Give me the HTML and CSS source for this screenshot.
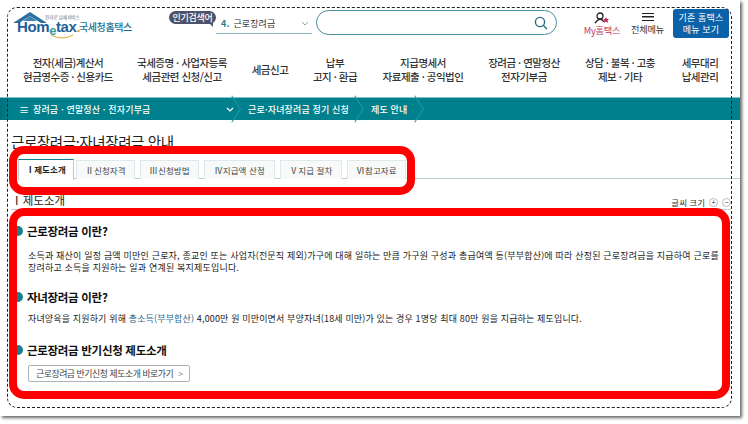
FILE: index.html
```html
<!DOCTYPE html>
<html lang="ko">
<head>
  <meta charset="UTF-8">
  <title>근로장려금 안내</title>
  <link rel="stylesheet" href="styles.css">
</head>
<body>
  <div class="shot">
    <header class="top">
      <div class="logo">
        <svg class="roof" width="36" height="13" viewBox="0 0 36 13"><path d="M0 12 L17 1 L34 12 L28 12 L17 5 L6 12 Z" fill="#2f6f9f"/><path d="M10 10 L17 5 L24 10 Z" fill="#3f82b5"/></svg>
        <span class="logo-small">전자로 납세서비스</span>
        <span class="logo-word">Hom<span class="logo-e">e</span>tax<span class="logo-dot">.</span></span>
        <svg class="logo-arc" width="24" height="6" viewBox="0 0 24 6"><path d="M1 1 Q12 7 23 1" fill="none" stroke="#e8a33c" stroke-width="1"/></svg>
        <span class="logo-kr">국세청홈택스</span>
      </div>
      <div class="popular">
        <span class="popular-tag">인기검색어</span>
        <div class="popular-row"><b>4.</b> 근로장려금<svg class="chev" width="8" height="5" viewBox="0 0 8 5"><path d="M1 1 L4 4 L7 1" fill="none" stroke="#8aa" stroke-width="1"/></svg></div>
      </div>
      <div class="search">
        <svg width="14" height="14" viewBox="0 0 14 14"><circle cx="6" cy="6" r="4.6" fill="none" stroke="#2c6f80" stroke-width="1.4"/><path d="M9.5 9.5 L13 13" stroke="#2c6f80" stroke-width="1.4"/></svg>
      </div>
      <a class="my">
        <svg width="16" height="13" viewBox="0 0 16 13"><circle cx="6" cy="4" r="3" fill="none" stroke="#222" stroke-width="1.3"/><path d="M1 11 Q6 4 10 10" fill="none" stroke="#222" stroke-width="1.3"/><path d="M12 5 L13 7 L15 7 L13.6 8.5 L14.2 11 L12 9.6 L9.8 11 L10.4 8.5 L9 7 L11 7 Z" fill="#c2255c"/></svg>
        <span>My홈택스</span>
      </a>
      <a class="all">
        <span class="burger"></span>
        <span>전체메뉴</span>
      </a>
      <a class="old">기존 홈택스<br>메뉴 보기</a>
    </header>

    <nav class="gnb">
      <a class="g1">전자(세금)계산서<br>현금영수증 · 신용카드</a>
      <a class="g2">국세증명 · 사업자등록<br>세금관련 신청/신고</a>
      <a class="g3">세금신고</a>
      <a class="g4">납부<br>고지 · 환급</a>
      <a class="g5">지급명세서<br>자료제출 · 공익법인</a>
      <a class="g6">장려금 · 연말정산<br>전자기부금</a>
      <a class="g7">상담 · 불복 · 고충<br>제보 · 기타</a>
      <a class="g8">세무대리<br>납세관리</a>
    </nav>

    <div class="crumbs">
      <span class="crumb c1"><i class="ham">≡</i>장려금 · 연말정산 · 전자기부금<svg class="crumb-v" width="8" height="5" viewBox="0 0 8 5"><path d="M1 1 L4 4 L7 1" fill="none" stroke="#fff" stroke-width="1.2"/></svg></span>
      <span class="crumb c2">근로·자녀장려금 정기 신청</span>
      <span class="crumb c3">제도 안내</span>
    </div>

    <main class="content">
      <h1 class="page-title">근로장려금·자녀장려금 안내</h1>
      <ul class="tabs">
        <li class="tab on">Ⅰ 제도소개</li>
        <li class="tab">Ⅱ신청자격</li>
        <li class="tab">Ⅲ신청방법</li>
        <li class="tab t4">Ⅳ지급액 산정</li>
        <li class="tab t5">Ⅴ지급 절차</li>
        <li class="tab">Ⅵ참고자료</li>
      </ul>
      <div class="sec-head">
        <h2>Ⅰ 제도소개</h2>
        <div class="font-size">글씨 크기 <i>+</i><i>−</i></div>
      </div>
      <section class="block b1">
        <h3>근로장려금 이란?</h3>
        <p>소득과 재산이 일정 금액 미만인 근로자, 종교인 또는 사업자(전문직 제외)가구에 대해 일하는 만큼 가구원 구성과 총급여액 등(부부합산)에 따라 산정된 근로장려금을 지급하여 근로를<br>장려하고 소득을 지원하는 일과 연계된 복지제도입니다.</p>
      </section>
      <section class="block b2">
        <h3>자녀장려금 이란?</h3>
        <p>자녀양육을 지원하기 위해 <span class="link">총소득(부부합산)</span> 4,000만 원 미만이면서 부양자녀(18세 미만)가 있는 경우 1명당 최대 80만 원을 지급하는 제도입니다.</p>
      </section>
      <section class="block b3">
        <h3>근로장려금 반기신청 제도소개</h3>
        <a class="go">근로장려금 반기신청 제도소개 바로가기 <span>&gt;</span></a>
      </section>
    </main>

    <div class="dash"></div>
    <div class="mark m1"></div>
    <div class="mark m2"></div>
  </div>
</body>
</html>
```

FILE: styles.css
```css
* {
  box-sizing: border-box;
}
html, body {
  margin: 0;
  padding: 0;
  background: #fff;
}
body {
  width: 748px;
  height: 424px;
  overflow: hidden;
  font-family: "Noto Sans CJK KR", "Noto Sans", sans-serif;
  color: #222;
}
.shot {
  position: relative;
  width: 740px;
  height: 416px;
  background: #fff;
  box-shadow: 2px 2px 3px #666;
}

/* top bar */
.top {
  display: flex;
  align-items: flex-start;
  height: 48px;
  padding: 10px 0 0 12px;
}
.logo {
  position: relative;
  flex: none;
  width: 157px;
  height: 30px;
}
.roof {
  position: absolute;
  left: 1px;
  top: 1px;
}
.logo-small {
  position: absolute;
  left: 33px;
  top: 5px;
  font-size: 4.5px;
  line-height: 5px;
  color: #666;
  white-space: nowrap;
}
.logo-word {
  position: absolute;
  left: 5px;
  top: 10px;
  font: bold 15px/14px "Liberation Sans", sans-serif;
  letter-spacing: -0.4px;
  color: #1f5f96;
}
.logo-e {
  color: #3a9a9f;
  font-size: 13px;
  position: relative;
  top: 3px;
}
.logo-dot {
  color: #e8a33c;
}
.logo-arc {
  position: absolute;
  left: 38px;
  top: 24px;
}
.logo-kr {
  position: absolute;
  left: 67px;
  top: 10px;
  font-size: 10px;
  line-height: 13px;
  font-weight: 500;
  letter-spacing: -0.4px;
  color: #1f6f8f;
  white-space: nowrap;
}
.popular {
  display: flex;
  align-items: flex-start;
  flex: none;
}
.popular-tag {
  position: relative;
  flex: none;
  width: 47px;
  height: 13px;
  margin-top: 1px;
  border-radius: 7px;
  background: #4b5269;
  color: #fff;
  font-size: 9px;
  line-height: 13px;
  font-weight: 500;
  letter-spacing: -0.3px;
  text-align: center;
  white-space: nowrap;
}
.popular-tag::after {
  content: "";
  position: absolute;
  right: 3px;
  bottom: -3px;
  border-top: 4px solid #4b5269;
  border-left: 4px solid transparent;
}
.popular-row {
  display: flex;
  align-items: center;
  gap: 4px;
  width: 96px;
  height: 20px;
  margin-top: 4px;
  padding-left: 5px;
  border-bottom: 1px solid #8fb0bd;
  font-size: 9px;
  letter-spacing: 0.1px;
  color: #333;
  white-space: nowrap;
}
.popular-row b {
  color: #2d7f8e;
}
.chev {
  margin-left: auto;
  margin-right: 3px;
}
.search {
  display: flex;
  flex: none;
  align-items: center;
  justify-content: flex-end;
  width: 241px;
  height: 25px;
  margin-left: 4px;
  padding-right: 8px;
  border: 1px solid #4d8ea0;
  border-radius: 13px;
}
.my, .all {
  display: flex;
  flex: none;
  flex-direction: column;
  align-items: center;
  font-size: 9.2px;
  line-height: 11px;
  letter-spacing: -0.2px;
  white-space: nowrap;
}
.my {
  width: 38px;
  margin-left: 26px;
  padding-top: 2px;
  color: #b83a5e;
}
.all {
  width: 33px;
  margin-left: 10px;
  padding-top: 3px;
  color: #333;
}
.burger {
  width: 12px;
  height: 8px;
  margin-bottom: 3px;
  border-top: 1.5px solid #222;
  border-bottom: 1.5px solid #222;
  background: linear-gradient(#222, #222) center / 100% 1.5px no-repeat;
}
.old {
  flex: none;
  width: 56px;
  height: 29px;
  margin: -1px 0 0 9px;
  padding-top: 3px;
  border-radius: 3px;
  background: #0b62a8;
  color: #fff;
  font-size: 9px;
  line-height: 12px;
  letter-spacing: 0.2px;
  text-align: center;
}

/* main menu */
.gnb {
  display: flex;
  align-items: center;
  height: 49px;
  padding-bottom: 5px;
  font-size: 10.5px;
  line-height: 14px;
  font-weight: 500;
  letter-spacing: -0.5px;
  color: #333;
  text-align: center;
  white-space: nowrap;
}
.gnb a {
  display: block;
  flex: none;
}
.g1 { width: 136px; }
.g2 { width: 92px; }
.g3 { width: 84px; }
.g4 { width: 46px; }
.g5 { width: 130px; }
.g6 { width: 72px; }
.g7 { width: 120px; }
.g8 { width: 40px; }

/* breadcrumb */
.crumbs {
  display: flex;
  align-items: center;
  height: 23px;
  border-top: 1px solid #7fc4cc;
  background: linear-gradient(90deg, #006f7c 0, #007f8c 10px);
  color: #fff;
  font-size: 9px;
  font-weight: 500;
  letter-spacing: 0.15px;
  white-space: nowrap;
}
.crumb {
  display: flex;
  align-items: center;
  height: 100%;
  position: relative;
}
.crumb::after {
  content: "";
  position: absolute;
  right: 3px;
  top: 3px;
  width: 15px;
  height: 15px;
  border-top: 1px solid #2a97a3;
  border-right: 1px solid #2a97a3;
  transform: rotate(45deg) skew(12deg, 12deg);
}
.c1 { width: 243px; padding-left: 19px; }
.c2 { width: 123px; padding-left: 5px; }
.c3 { width: 60px; padding-left: 5px; }
.ham {
  width: 14px;
  font-style: normal;
  font-size: 10px;
}
.crumb-v {
  margin-left: 75px;
}

/* content */
.content {
  padding: 12px 9px 0 11px;
}
.page-title {
  margin: 0;
  height: 20px;
  font-size: 14.5px;
  line-height: 20px;
  font-weight: 400;
  letter-spacing: -0.4px;
  color: #222;
}
.tabs {
  display: flex;
  gap: 5px;
  height: 20px;
  margin: 7px -9px 0 7px;
  padding: 0;
  list-style: none;
  border-bottom: 1px solid #bcd0d4;
}
.tab {
  width: 59px;
  height: 19px;
  margin-top: 1px;
  border: 1px solid #dfe8ea;
  border-bottom: 0;
  background: #f8fafa;
  font-size: 8.5px;
  line-height: 18px;
  text-align: center;
  letter-spacing: 0.1px;
  color: #444;
  white-space: nowrap;
}
.tab.t4 {
  width: 71px;
}
.tab.t5 {
  width: 62px;
}
.tab.on {
  width: 56px;
  height: 21px;
  margin: 0 -3px 0 0;
  border: 1px solid #b6cbd0;
  border-top: 1.5px solid #127f8c;
  border-bottom: 0;
  background: #fff;
  font-weight: 700;
  word-spacing: -3px;
  color: #222;
  position: relative;
  z-index: 1;
}
.sec-head {
  display: flex;
  justify-content: space-between;
  align-items: flex-end;
  height: 31px;
  padding-bottom: 1px;
  border-bottom: 1px solid #ccc;
}
.sec-head h2 {
  margin: 0;
  font-size: 11.5px;
  line-height: 16px;
  font-weight: 400;
  word-spacing: -3px;
}
.font-size {
  display: flex;
  align-items: center;
  font-size: 8.5px;
  line-height: 12px;
  color: #333;
  white-space: nowrap;
}
.font-size i {
  display: block;
  width: 9px;
  height: 9px;
  margin-left: 4px;
  border: 1px solid #bbb;
  border-radius: 50%;
  font: normal 7px/7px "Liberation Sans", sans-serif;
  text-align: center;
}
.block h3 {
  position: relative;
  margin: 0;
  padding-left: 16px;
  font-size: 11.5px;
  line-height: 16px;
  font-weight: 700;
  letter-spacing: -0.3px;
  color: #111;
}
.block h3::before {
  content: "";
  position: absolute;
  left: 2px;
  top: 3px;
  width: 10px;
  height: 10px;
  border-radius: 50%;
  background: #17808f;
}
.block p {
  margin: 0;
  padding-left: 17px;
  font-size: 9px;
  line-height: 12px;
  letter-spacing: 0.19px;
  color: #222;
  white-space: nowrap;
}
.b1 { padding-top: 13px; }
.b1 p { padding-top: 11px; }
.b2 { padding-top: 15px; }
.b2 p { padding-top: 8px; letter-spacing: 0.15px; }
.b3 { padding-top: 17px; }
.link {
  color: #1c6a8c;
}
.go {
  display: inline-block;
  height: 17px;
  margin: 7px 0 0 17px;
  padding: 0 6px 0 7px;
  border: 1px solid #aab4bb;
  border-radius: 2px;
  font-size: 8.9px;
  line-height: 15px;
  letter-spacing: -0.45px;
  color: #444;
  white-space: nowrap;
}
.go span {
  margin-left: 3px;
  color: #888;
}

/* annotations over the page */
.dash {
  position: absolute;
  left: 7px;
  top: 7px;
  width: 725px;
  height: 401px;
  border: 1px dashed #222;
  border-radius: 10px;
  pointer-events: none;
}
.mark {
  position: absolute;
  border: 8px solid #f00;
  border-radius: 15px;
  pointer-events: none;
}
.m1 {
  left: 9px;
  top: 146px;
  width: 406px;
  height: 49px;
}
.m2 {
  left: 9px;
  top: 208px;
  width: 721px;
  height: 191px;
}
```
